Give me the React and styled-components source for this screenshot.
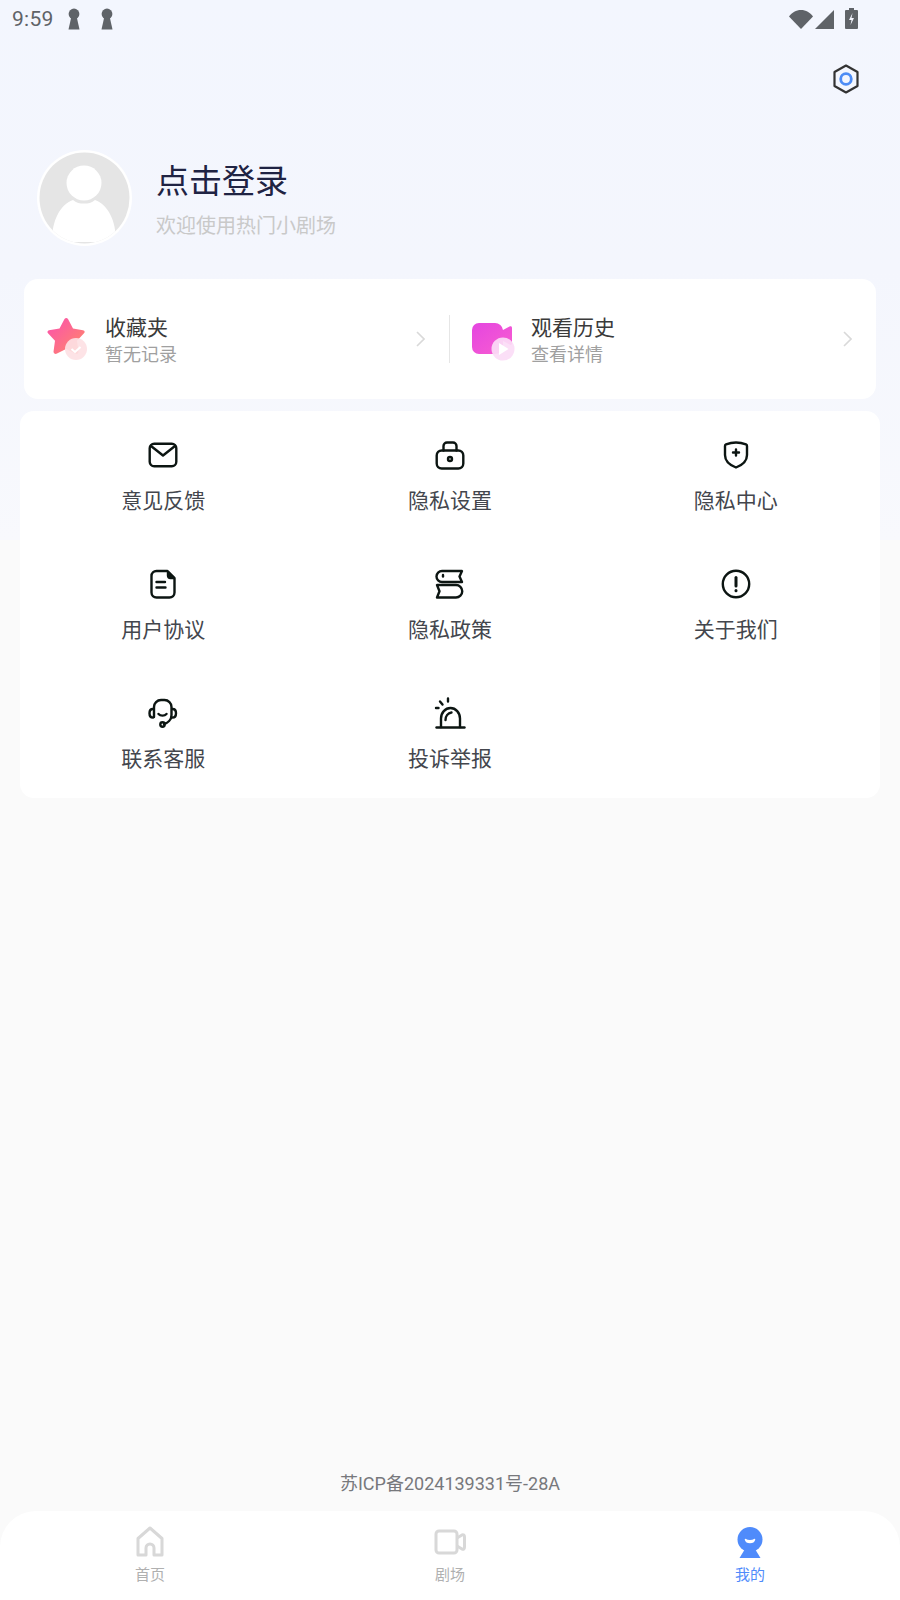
import React from 'react';
import styled, { createGlobalStyle } from 'styled-components';

const Global = createGlobalStyle`
  html, body { margin: 0; padding: 0; }
  body { font-family: Roboto, "Noto Sans CJK SC", sans-serif; background: #fafafa; }
  * { box-sizing: border-box; }
`;
const Page = styled.div`
  width: 900px; height: 1600px; display: flex; flex-direction: column; overflow: hidden;
  background: linear-gradient(180deg, #f3f6fe 0%, #f4f6fd 50%, #f8f9fd 100%) no-repeat top / 100% 540px, #fafafa;
`;
const StatusBar = styled.div`
  height: 38px; display: flex; align-items: center; padding: 0 42px 0 12px; color: #5f6368;
`;
const Time = styled.span`
  font: 400 21px/1 Roboto, sans-serif; width: 56px; color: #5f6368; letter-spacing: .3px;
`;
const StatusLeft = styled.div`display: flex; gap: 21px; flex: 1;`;
const StatusRight = styled.div`display: flex; align-items: flex-start; gap: 2px;`;
const TopAction = styled.div`
  height: 82px; display: flex; justify-content: flex-end; align-items: center; padding: 0 41px 0 0;
`;
const Profile = styled.div`
  height: 96px; margin-top: 30px; padding-left: 37px; display: flex; align-items: center; gap: 24px;
`;
const Avatar = styled.svg`width: 95px; height: 96px; flex: none;`;
const ProfileText = styled.div`display: flex; flex-direction: column; gap: 7px; padding-top: 2px;`;
const Title = styled.div`font-size: 33px; line-height: 46px; color: #1f2343;`;
const Sub = styled.div`font-size: 20px; line-height: 28px; color: #c9c9c9;`;
const QuickCard = styled.div`
  margin: 33px 24px 0; height: 120px; background: #fff; border-radius: 14px; display: flex; align-items: center;
`;
const QuickItem = styled.div`
  flex: 1; height: 48px; display: flex; align-items: center; padding: 0 24px 0 20px;
  &:first-child { flex: 0 0 425px; padding-right: 24px; }
  & + & { border-left: 1px solid #e6e6e6; }
`;
const QuickIcon = styled.svg`width: 46px; height: 48px; flex: none; margin-right: 15px;`;
const QuickText = styled.div`flex: 1; display: flex; flex-direction: column; padding-top: 2px;`;
const QuickTitle = styled.div`font-size: 21px; line-height: 26px; color: #3a3a3a;`;
const QuickSub = styled.div`font-size: 18px; line-height: 23px; margin-top: 2px; color: #a0a0a0;`;
const MenuCard = styled.div`
  margin: 12px 20px 0; background: #fff; border-radius: 14px; padding: 28px 0 24px;
  display: grid; grid-template-columns: repeat(3, 1fr); grid-auto-rows: 77px; row-gap: 52px;
`;
const MenuItem = styled.div`
  display: flex; flex-direction: column; align-items: center; gap: 15px;
  &:nth-child(3n) { padding-right: 2px; }
`;
const MenuIcon = styled.svg`
  width: 32px; height: 32px; overflow: visible; fill: none; stroke: #0c1512; stroke-width: 2.4; stroke-linecap: round; stroke-linejoin: round;
`;
const MenuLabel = styled.div`font-size: 21px; line-height: 30px; color: #43464d;`;
const Spacer = styled.div`flex: 1;`;
const Record = styled.div`
  text-align: center; font-size: 18px; line-height: 24px; color: #77787c; margin-bottom: 15px;
`;
const TabBar = styled.div`
  height: 89px; background: #fff; border-radius: 36px 36px 0 0; display: grid; grid-template-columns: repeat(3, 1fr);
`;
const Tab = styled.div`
  display: flex; flex-direction: column; align-items: center; padding-top: 15px;
  color: ${p => (p.$active ? '#4f8bfb' : '#b0b0b0')};
`;
const TabIcon = styled.svg`width: 32px; height: 32px;`;
const TabLabel = styled.div`font-size: 15px; line-height: 20px; margin-top: 7px;`;

const Keyhole = () => (
  <svg width="12" height="22" viewBox="0 0 12 22">
    <circle cx="6" cy="6" r="5.4" fill="#5f6368" />
    <path d="M3.5 8h5l3 13.5H.5z" fill="#5f6368" />
  </svg>
);

const icons = {
  mail: <><rect x="2.700" y="4.700" width="26.600" height="22.600" rx="4.500" /><path d="M4 7l12 9.500L28 7" /></>,
  lock: <><rect x="2.700" y="11.500" width="26.600" height="18" rx="5" /><path d="M9.500 11.500V7A3.500 3.500 0 0 1 13 3.500h6A3.500 3.500 0 0 1 22.500 7v4.500" /><circle cx="16" cy="20" r="2" /></>,
  shield: <><path d="M16 3.500c3.500 0 7 .7 10 1.800.8.3 1 .9 1 1.700V16c0 6-4.500 10-11 12.500C9.500 26 5 22 5 16V7c0-.8.2-1.400 1-1.700 3-1.100 6.500-1.800 10-1.800z" /><path d="M16 10.500v6M13 13.500h6" /></>,
  doc: <><path d="M9.500 3h11l7 7v14.500a5 5 0 0 1-5 5h-13a5 5 0 0 1-5-5V8a5 5 0 0 1 5-5z" /><path d="M21 4v3.500A2.500 2.500 0 0 0 23.500 10H27z" fill="#0c1512" /><path d="M9.500 14h8.500M9.500 19.500h9" /></>,
  books: <><path d="M28 3H8a5.500 5.500 0 0 0 0 11h20l-2.500-5.500z" /><path d="M9 7v1.500" /><path d="M3 17h19a6.200 6.200 0 0 1 0 12.500H3l2.500-6.250z" /></>,
  info: <><circle cx="16" cy="16" r="13.200" /><path d="M16 9.500v8.500" strokeWidth="3" /><path d="M16 22.500v.2" strokeWidth="3" /></>,
  service: <><path d="M7 20V10a7 7 0 0 1 7-7h3.500a7 7 0 0 1 7 7v8c0 5-4 8-7.500 9" /><path d="M6 12c-2 0-3.500 1.500-3.500 4.200S4 20.500 6 20.500M25.500 12c2 0 3.500 1.500 3.500 4.200s-1.500 4.300-3.500 4.300" /><path d="M11.500 17c2 2.200 6 2.200 8 0" /><circle cx="15.500" cy="27.500" r="2.200" /></>,
  alarm: <><path d="M2.500 30.500h28" /><path d="M7 30V21.500a9.500 10.500 0 0 1 19 0V30" /><path d="M11.500 23c0-4 2.500-7 6-7.500" /><path d="M14 1.500v3M6 4.500l2.500 3M2 11h2.500" /></>,
};

const Icon = ({ name }) => <MenuIcon viewBox="0 0 32 32">{icons[name]}</MenuIcon>;

const Chevron = () => (
  <svg width="9" height="16" viewBox="0 0 9 16" fill="none" stroke="#d9d9d9" strokeWidth="1.6"><path d="M1 1l7 7-7 7" /></svg>
);

const menu = [
  ['mail', '意见反馈'], ['lock', '隐私设置'], ['shield', '隐私中心'],
  ['doc', '用户协议'], ['books', '隐私政策'], ['info', '关于我们'],
  ['service', '联系客服'], ['alarm', '投诉举报'],
];

export default function App() {
  return (
    <Page>
      <Global />
      <StatusBar>
        <Time>9:59</Time>
        <StatusLeft><Keyhole /><Keyhole /></StatusLeft>
        <StatusRight>
          <svg width="24" height="19" viewBox="0 0 24 19" style={{ marginTop: 1 }}><path d="M0 6.500C3 2.500 7 0 12 0s9 2.500 12 6.500L12 19z" fill="#5f6368" /></svg>
          <svg width="19" height="19" viewBox="0 0 19 19" style={{ marginTop: 1 }}><path d="M19 0v19H0z" fill="#5f6368" /></svg>
          <svg width="13" height="21" viewBox="0 0 13 21" style={{ marginLeft: 9, marginTop: -1 }}><path d="M4 0h5v2h3a1 1 0 0 1 1 1v17a1 1 0 0 1-1 1H1a1 1 0 0 1-1-1V3a1 1 0 0 1 1-1h3z" fill="#5f6368" /><path d="M7.500 5L4 12h2.500l-1 5L9 10H6.500z" fill="#f3f5fe" /></svg>
        </StatusRight>
      </StatusBar>
      <TopAction>
        <svg width="26" height="30" viewBox="0 0 26 30" fill="none">
          <path d="M13 1.500L24.500 8v14L13 28.500 1.500 22V8z" stroke="#333" strokeWidth="2.200" strokeLinejoin="round" />
          <circle cx="13" cy="15" r="5.300" stroke="#4d8cf5" strokeWidth="2.800" />
        </svg>
      </TopAction>
      <Profile>
        <Avatar viewBox="0 0 95 96">
          <defs><clipPath id="av"><ellipse cx="47.500" cy="48" rx="45" ry="45.500" /></clipPath></defs>
          <ellipse cx="47.500" cy="48" rx="47.500" ry="48" fill="#fff" />
          <ellipse cx="47.500" cy="48" rx="45" ry="45.500" fill="#e5e5e5" />
          <g clipPath="url(#av)">
            <ellipse cx="47" cy="33" rx="17.500" ry="17.500" fill="#fff" />
            <path d="M15 92c0-22 8-37 21-42 3 3 7 3.500 11 3.500s8-.5 11-3.500c13 5 21 20 21 42z" fill="#fff" />
          </g>
        </Avatar>
        <ProfileText>
          <Title>点击登录</Title>
          <Sub>欢迎使用热门小剧场</Sub>
        </ProfileText>
      </Profile>
      <QuickCard>
        <QuickItem>
          <QuickIcon viewBox="0 0 46 48">
            <defs><linearGradient id="st" x1="0" y1="0" x2="1" y2="1"><stop offset="0" stopColor="#fb4fb0" /><stop offset="1" stopColor="#ff8a66" /></linearGradient></defs>
            <path d="M20.500 4c1-1.500 2.500-1.500 3.500 0l5 9.500 10 1.800c2 .5 2 2 1 3l-7 7.500 1.500 11c0 1.500-1 2.500-2.500 2l-10-4.800-9.500 4.800c-1.500.5-3-.5-3-2l1.500-11L4 18.300c-1-1-.5-2.500 1-3l10.500-1.800z" fill="url(#st)" />
            <circle cx="32" cy="34" r="11" fill="#fde1e4" fillOpacity=".92" />
            <path d="M27.500 34l3.500 3 5.500-5" fill="none" stroke="#fff" strokeWidth="2" />
          </QuickIcon>
          <QuickText>
            <QuickTitle>收藏夹</QuickTitle>
            <QuickSub>暂无记录</QuickSub>
          </QuickText>
          <Chevron />
        </QuickItem>
        <QuickItem>
          <QuickIcon viewBox="0 0 46 48">
            <defs><linearGradient id="vd" x1="0" y1="0" x2="1" y2="1"><stop offset="0" stopColor="#e445e0" /><stop offset="1" stopColor="#f95ed0" /></linearGradient></defs>
            <path d="M9 8h16a8 8 0 0 1 8 7l6.500-3.500c1.500-.5 2.500 0 2.500 1.500v15c0 2-1 2.500-2.500 1.500L33 26v5a8 8 0 0 1-8 8H9a7 7 0 0 1-7-7V15a7 7 0 0 1 7-7z" fill="url(#vd)" />
            <circle cx="33" cy="34" r="11.500" fill="#fbdcf6" fillOpacity=".92" />
            <path d="M29 28v12l9.500-6z" fill="#fff" />
          </QuickIcon>
          <QuickText>
            <QuickTitle>观看历史</QuickTitle>
            <QuickSub>查看详情</QuickSub>
          </QuickText>
          <Chevron />
        </QuickItem>
      </QuickCard>
      <MenuCard>
        {menu.map(([icon, label]) => (
          <MenuItem key={label}>
            <Icon name={icon} />
            <MenuLabel>{label}</MenuLabel>
          </MenuItem>
        ))}
      </MenuCard>
      <Spacer />
      <Record>苏ICP备2024139331号-28A</Record>
      <TabBar>
        <Tab>
          <TabIcon viewBox="0 0 32 32" fill="none" stroke="#d8d8d8" strokeWidth="3" strokeLinejoin="round">
            <path d="M4 12.500L16 2l12 10.500V29H20v-7a4 4 0 0 0-8 0v7H4z" />
          </TabIcon>
          <TabLabel>首页</TabLabel>
        </Tab>
        <Tab>
          <TabIcon viewBox="0 0 32 32" fill="none" stroke="#d8d8d8" strokeWidth="3" strokeLinejoin="round">
            <path d="M5 5h15a3 3 0 0 1 3 3v16a3 3 0 0 1-3 3H5a3 3 0 0 1-3-3V8a3 3 0 0 1 3-3z" />
            <path d="M23 12l5-3c1.500-.5 2.500 0 2.500 2v10c0 2-1 2.500-2.500 2l-5-3" />
          </TabIcon>
          <TabLabel>剧场</TabLabel>
        </Tab>
        <Tab $active>
          <TabIcon viewBox="0 0 32 32">
            <ellipse cx="16" cy="13.500" rx="12.500" ry="12.500" fill="#4f8bfb" />
            <path d="M11 23h10l5.500 9h-21z" fill="#4f8bfb" />
            <path d="M11.500 13.500c1 4 8 4 9 0-2 1.500-7 1.500-9 0z" fill="#fff" stroke="#fff" strokeWidth="1.500" strokeLinejoin="round" />
          </TabIcon>
          <TabLabel>我的</TabLabel>
        </Tab>
      </TabBar>
    </Page>
  );
}
